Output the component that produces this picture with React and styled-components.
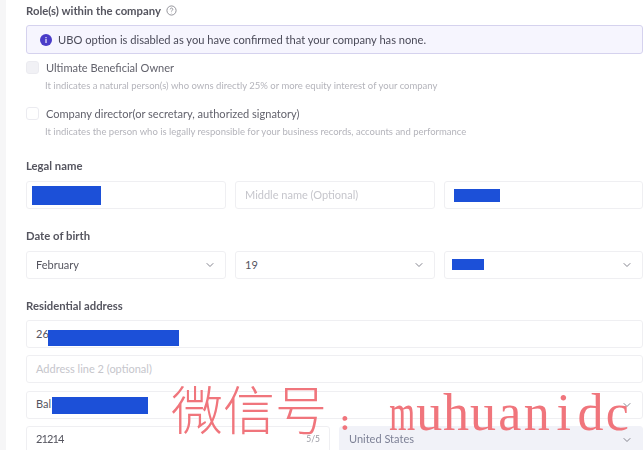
import React from 'react'
import styled, { createGlobalStyle } from 'styled-components'
import { ChevronDown } from 'lucide-react'

const GlobalStyle = createGlobalStyle`
  html, body {
    margin: 0;
    background: #fff;
    overflow: hidden;
  }
  * {
    box-sizing: border-box;
  }
`

const Page = styled.div`
  position: relative;
  width: 644px;
  height: 450px;
  overflow: hidden;
  background: #fff;
  font-family: Lato, "Noto Sans", sans-serif;
`

const Form = styled.div`
  display: flex;
  flex-direction: column;
  margin-left: 6px;
  padding: 3px 1px 0 20px;
  filter: blur(0.45px);
`

const Rail = styled.div`
  position: absolute;
  left: 0;
  top: 0;
  bottom: 0;
  width: 6px;
  background: #f6f6f7;
`

const Label = styled.div`
  display: flex;
  align-items: center;
  gap: 5px;
  height: 15px;
  font-size: 11.3px;
  font-weight: 700;
  color: #55555f;
  margin-top: ${p => p.$top || 0}px;
`

const Notice = styled.div`
  display: flex;
  align-items: center;
  gap: 6px;
  height: 29px;
  margin-top: 7px;
  padding-left: 13px;
  background: #f6f5fe;
  border: 1px solid #d5d2ee;
  border-radius: 3px;
  font-size: 11.15px;
  color: #4a4a58;
`

const InfoDot = styled.span`
  display: flex;
  align-items: center;
  justify-content: center;
  width: 12px;
  height: 12px;
  border-radius: 50%;
  background: #4a3cc8;
  color: #fff;
  font-size: 8px;
  font-weight: 700;
`

const CheckRow = styled.div`
  display: flex;
  align-items: center;
  gap: 7px;
  height: 16px;
  margin-top: ${p => p.$top}px;
  font-size: 11.05px;
  color: ${p => (p.$muted ? '#85858f' : '#62626c')};
`

const CheckBox = styled.span`
  width: 13px;
  height: 13px;
  border-radius: 3px;
  border: 1px solid #ebebf0;
  background: ${p => (p.$disabled ? '#f1f1f5' : '#fff')};
`

const Help = styled.div`
  margin: 4px 0 0 19px;
  height: 14px;
  line-height: 14px;
  font-size: 9.5px;
  color: #b4b4bb;
`

const Row = styled.div`
  display: grid;
  grid-template-columns: ${p => p.$columns};
  gap: 9px;
  margin-top: ${p => p.$top}px;
`

const Field = styled.div`
  position: relative;
  display: flex;
  align-items: center;
  justify-content: space-between;
  height: 28px;
  padding: 0 9px 2px;
  background: ${p => (p.$filled ? '#f1f2f8' : '#fff')};
  border: 1px solid ${p => (p.$filled ? '#f1f2f8' : '#efeff2')};
  border-radius: 3px;
  font-size: 11px;
  color: ${p => (p.$filled ? '#7d8196' : '#55555f')};
`

const Placeholder = styled.span`
  color: #c6c6cc;
`

const ZipValue = styled.span`
  letter-spacing: -0.9px;
`

const Counter = styled.span`
  font-size: 8.5px;
  color: #9a9aa3;
`

const Redacted = styled.span`
  position: absolute;
  left: ${p => p.$left}px;
  top: ${p => p.$top}px;
  width: ${p => p.$width}px;
  height: ${p => p.$height}px;
  background: #1c50d8;
`

const Arrow = styled(ChevronDown)`
  width: 12px;
  height: 12px;
  margin-top: 2px;
  margin-left: auto;
  color: #85858f;
`

const Watermark = styled.div`
  position: absolute;
  left: 171px;
  top: 375px;
  display: flex;
  align-items: baseline;
  line-height: 66px;
  color: #f0757c;
  white-space: nowrap;
`

const WatermarkCjk = styled.span`
  font-family: "Noto Sans CJK SC", serif;
  font-size: 52px;
  font-weight: 300;
`

const WatermarkColon = styled.span`
  width: 36px;
  margin-right: 26px;
  text-align: center;
  font-family: "Liberation Serif", serif;
  font-size: 30px;
  font-weight: 700;
`

// half-width cells, the way the watermark's font sets latin text
const WatermarkLetter = styled.span`
  display: inline-block;
  width: ${p => (p.$wide ? '40.1px' : '26.9px')};
  margin: ${p => (p.$wide ? '0 -6.7px' : '0')};
  text-align: center;
  font-family: "Liberation Serif", serif;
  font-size: 52px;
  transform: ${p => (p.$wide ? 'scaleX(0.64)' : 'none')};
`

const App = () => (
  <Page>
    <GlobalStyle />
    <Rail />
    <Form>
      <Label>
        Role(s) within the company
        <svg width="11" height="11" viewBox="0 0 12 12" fill="none" stroke="#8a8a92">
          <circle cx="6" cy="6" r="5" />
          <path d="M4.6 4.7a1.4 1.4 0 1 1 2.2 1.2c-.5.3-.8.6-.8 1.1" />
          <path d="M6 8.6v.4" />
        </svg>
      </Label>
      <Notice>
        <InfoDot>i</InfoDot>
        UBO option is disabled as you have confirmed that your company has none.
      </Notice>
      <CheckRow $top={5}>
        <CheckBox $disabled />
        Ultimate Beneficial Owner
      </CheckRow>
      <Help>It indicates a natural person(s) who owns directly 25% or more equity interest of your company</Help>
      <CheckRow $top={12}>
        <CheckBox />
        Company director(or secretary, authorized signatory)
      </CheckRow>
      <Help>It indicates the person who is legally responsible for your business records, accounts and performance</Help>

      <Label $top={19}>Legal name</Label>
      <Row $columns="200px 200px 199px" $top={8}>
        <Field><Redacted $left={5} $top={4} $width={69} $height={19} /></Field>
        <Field><Placeholder>Middle name (Optional)</Placeholder></Field>
        <Field><Redacted $left={9} $top={7} $width={46} $height={13} /></Field>
      </Row>

      <Label $top={19}>Date of birth</Label>
      <Row $columns="200px 200px 199px" $top={8}>
        <Field>February<Arrow /></Field>
        <Field>19<Arrow /></Field>
        <Field><Redacted $left={7} $top={7} $width={32} $height={11} /><Arrow /></Field>
      </Row>

      <Label $top={19}>Residential address</Label>
      <Row $columns="1fr" $top={7}>
        <Field>26<Redacted $left={21} $top={9} $width={131} $height={16} /></Field>
      </Row>
      <Row $columns="1fr" $top={7.33}>
        <Field><Placeholder>Address line 2 (optional)</Placeholder></Field>
      </Row>
      <Row $columns="1fr" $top={7.33}>
        <Field>Bal<Redacted $left={25} $top={5} $width={96} $height={17} /><Arrow /></Field>
      </Row>
      <Row $columns="304px 304px" $top={7.33}>
        <Field><ZipValue>21214</ZipValue><Counter>5/5</Counter></Field>
        <Field $filled>United States<Arrow /></Field>
      </Row>
    </Form>
    <Watermark>
      <WatermarkCjk>微信号</WatermarkCjk>
      <WatermarkColon>:</WatermarkColon>
      {'muhuanidc'.split('').map((letter, i) => (
        <WatermarkLetter key={i} $wide={letter === 'm'}>{letter}</WatermarkLetter>
      ))}
    </Watermark>
  </Page>
)

export default App
